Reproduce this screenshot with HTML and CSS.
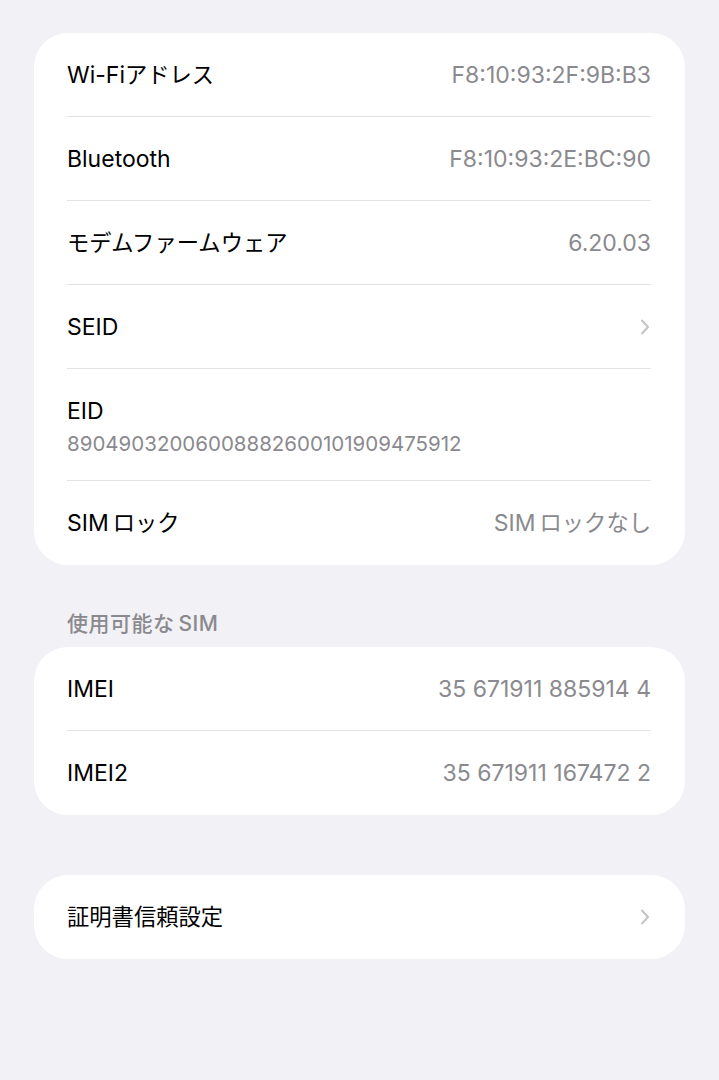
FILE: index.html
```html
<!DOCTYPE html>
<html lang="ja">
<head>
    <meta charset="UTF-8">
    <title>情報</title>
    <link rel="stylesheet" href="styles.css">
</head>
<body>
    <div class="page">
        <div class="group">
            <div class="row">
                <span class="label">Wi-Fi<span class="jp">アドレス</span></span>
                <span class="value">F8:10:93:2F:9B:B3</span>
            </div>
            <div class="row">
                <span class="label">Bluetooth</span>
                <span class="value">F8:10:93:2E:BC:90</span>
            </div>
            <div class="row">
                <span class="label jp">モデムファームウェア</span>
                <span class="value">6.20.03</span>
            </div>
            <div class="row">
                <span class="label">SEID</span>
                <svg class="chevron" width="10" height="16" viewBox="0 0 10 16">
                    <path d="M2 1.5 L8 8 L2 14.5" fill="none" stroke="#c4c4c7" stroke-width="2" stroke-linecap="round" stroke-linejoin="round"/>
                </svg>
            </div>
            <div class="row row-tall">
                <span class="label">EID</span>
                <span class="sub">89049032006008882600101909475912</span>
            </div>
            <div class="row">
                <span class="label">SIM<span class="jp jp-gap">ロック</span></span>
                <span class="value">SIM<span class="jp jp-gap">ロックなし</span></span>
            </div>
        </div>

        <div class="section-title">使用可能な<span class="jp-gap">SIM</span></div>
        <div class="group">
            <div class="row">
                <span class="label">IMEI</span>
                <span class="value">35 671911 885914 4</span>
            </div>
            <div class="row">
                <span class="label">IMEI2</span>
                <span class="value">35 671911 167472 2</span>
            </div>
        </div>

        <div class="group group-spaced">
            <div class="row">
                <span class="label jp">証明書信頼設定</span>
                <svg class="chevron" width="10" height="16" viewBox="0 0 10 16">
                    <path d="M2 1.5 L8 8 L2 14.5" fill="none" stroke="#c4c4c7" stroke-width="2" stroke-linecap="round" stroke-linejoin="round"/>
                </svg>
            </div>
        </div>
    </div>
</body>
</html>
```

FILE: styles.css
```css
body {
    margin: 0;
    padding: 0;
    background-color: #f2f1f6;
    font-family: Inter, "Noto Sans CJK JP", sans-serif;
    color: #000000;
}
.page {
    padding: 33px 34px 0 34px;
}
.group {
    background-color: #ffffff;
    border-radius: 34px;
}
.group-spaced {
    margin-top: 60px;
}
.row {
    display: flex;
    justify-content: space-between;
    align-items: center;
    height: 84px;
    margin: 0 34px 0 33px;
    border-bottom: 1px solid #e3e3e6;
    box-sizing: border-box;
}
.row:last-child {
    border-bottom: none;
}
.label {
    font-size: 23px;
    line-height: 28px;
}
.value {
    font-size: 23px;
    line-height: 28px;
    color: #8a8a8e;
}
.jp {
    font-size: 22.3px;
}
.jp-gap {
    margin-left: 4px;
}
.chevron {
    margin-right: 1px;
}
.row-tall {
    flex-direction: column;
    align-items: flex-start;
    justify-content: flex-start;
    height: 112px;
    padding-top: 28px;
}
.sub {
    margin-top: 7px;
    font-size: 20.5px;
    line-height: 24px;
    color: #8a8a8e;
}
.section-title {
    padding: 47px 33px 11px 33px;
    font-size: 21px;
    line-height: 24px;
    color: #8a8a8e;
    font-weight: 500;
    letter-spacing: 0.5px;
}
```
